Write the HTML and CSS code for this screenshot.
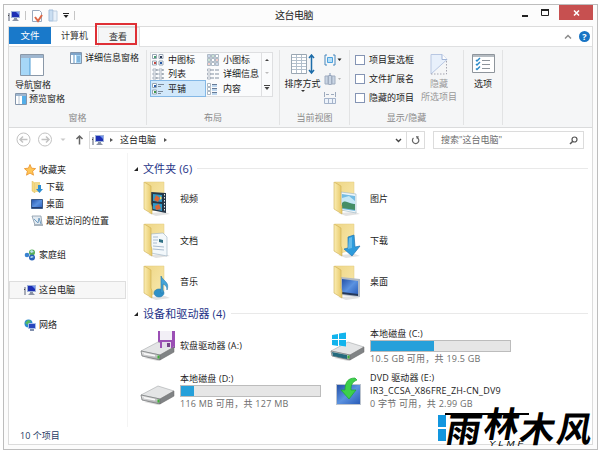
FILE: index.html
```html
<!DOCTYPE html>
<html>
<head>
<meta charset="utf-8">
<title>这台电脑</title>
<link rel="stylesheet" href="styles.css">
</head>
<body>
<svg class="defs" width="0" height="0">
  <defs>
    <linearGradient id="fold" x1="0" x2="1"><stop offset="0" stop-color="#fbeeb4"/><stop offset="1" stop-color="#e6c664"/></linearGradient>
    <linearGradient id="back" x1="0" y1="0" x2="1" y2="1"><stop offset="0" stop-color="#eed686"/><stop offset="1" stop-color="#f9e9ae"/></linearGradient>
    <linearGradient id="blue" x1="0" y1="0" x2="1" y2="1"><stop offset="0" stop-color="#2451a8"/><stop offset=".5" stop-color="#5b92e0"/><stop offset="1" stop-color="#2a5cb8"/></linearGradient>
    <linearGradient id="metal" x1="0" y1="0" x2="0" y2="1"><stop offset="0" stop-color="#f2f2f2"/><stop offset="1" stop-color="#a0a2a4"/></linearGradient>
    <symbol id="pc" viewBox="0 0 12 12"><path d="M0 3h2v8H0z" fill="#a9adb8"/><path d="M0 5h1v1H0z" fill="#444"/><path d="M3 1h9v7H3z" fill="#9db0d8"/><path d="M4 2h7v5H4z" fill="#1d2fb4"/><path d="M8 2h3v3z" fill="#6f93f0"/><path d="M6 8h3v1l2 2H4l2-2z" fill="#8b93a5"/></symbol>
    <symbol id="folder" viewBox="0 0 28 35"><path d="M5 32l17-1 5 2-14 2z" fill="#e2e2e2"/><path d="M2 1h19v25L8 30z" fill="url(#back)" stroke="#e3ca7e" stroke-width=".5"/></symbol>
    <symbol id="flap" viewBox="0 0 28 35"><path d="M1 1l7 4v18l1 3v7l-8-5z" fill="url(#fold)" stroke="#cfae50" stroke-width=".6"/></symbol>
    <symbol id="disk" viewBox="0 0 36 20"><path d="M4 17l14 3 17-9z" fill="#ddd"/><path d="M1 10L18 1l16 5-14 8z" fill="#e4e5e6" stroke="#a5a7a9" stroke-width=".6"/><path d="M1 10l19 4v5L2 15z" fill="url(#metal)" stroke="#6c6e70" stroke-width=".7"/><path d="M20 14l14-8v5l-14 8z" fill="#808385" stroke="#6a6a6a" stroke-width=".5"/><path d="M4 12l11 2v1.500L4 13.500z" fill="#fafafa"/><path d="M17.500 14.500h2v3h-2z" fill="#3cae34"/></symbol>
  </defs>
</svg>
<div class="window">
  <header class="titlebar">
    <div class="quick">
      <svg width="12" height="12"><use href="#pc"/></svg><i class="sep"></i>
      <svg width="12" height="14" viewBox="0 0 12 14"><path d="M1.500 1.500h7l2 2v9h-9z" fill="#fff" stroke="#9aa9bd"/><path d="M4 8l3 4 4-6" fill="none" stroke="#dc6746" stroke-width="2"/></svg>
      <svg width="10" height="13" viewBox="0 0 10 13"><path d="M1 1h4v11H1z" fill="#c9def2" stroke="#a2bddb"/><path d="M5 2h4v10H5z" fill="#e8f1fa" stroke="#bfd0e2"/></svg>
      <svg class="qmenu" width="6" height="5" viewBox="0 0 6 5"><path d="M0 0h6v1H0zM.5 2h5L3 5z" fill="#222"/></svg><i class="sep"></i>
    </div>
    <h1 class="title">这台电脑</h1>
    <div class="controls">
      <svg width="7" height="10" viewBox="0 0 7 10"><path d="M0 7h6v2H0z" fill="#222"/></svg>
      <svg width="8" height="7" viewBox="0 0 8 7"><path d="M.5 1h7v5.500h-7z" fill="none" stroke="#222"/><path d="M0 0h8v2H0z" fill="#222"/></svg>
      <div class="close"><svg width="7" height="6" viewBox="0 0 7 6"><path d="M1 .5l5 5M6 .5l-5 5" stroke="#fff" stroke-width="1.500"/></svg></div>
    </div>
  </header>
  <div class="client">
    <nav class="tabs">
      <span class="tab file">文件</span><span class="tab">计算机</span><span class="tab active">查看</span>
      <div class="tabtools">
        <svg width="8" height="5" viewBox="0 0 8 5"><path d="M1 4.500l3-3 3 3" fill="none" stroke="#8c8c8c" stroke-width="1.500"/></svg>
        <span class="help">?</span>
      </div>
    </nav>
    <section class="ribbon">
      <div class="group g1">
        <div class="body panes">
          <div class="navpane">
            <svg width="24" height="22" viewBox="0 0 24 22"><path d="M.5.5h23v21H.5z" fill="#fff" stroke="#8a98a8"/><path d="M1 1h22v3H1z" fill="#9eb6cf"/><path d="M1 4h9v17H1z" fill="#a6d7f7"/><path d="M10 4v17" stroke="#4e9bd3"/></svg>
            <span>导航窗格</span><i class="down"></i>
            <div class="pane"><svg width="12" height="12" viewBox="0 0 12 12"><path d="M.5.5h11v11H.5z" fill="#fff" stroke="#8496ac"/><path d="M1 1h10v2H1z" fill="#9eb6cf"/><path d="M7 3h4v8H7z" fill="#54aee8"/><path d="M4 3v8" stroke="#b8c6d4"/></svg>预览窗格</div>
          </div>
          <div class="pane detail"><svg width="12" height="12" viewBox="0 0 12 12"><path d="M.5.500h11v11H.5z" fill="#fff" stroke="#8496ac"/><path d="M1 1h10v2H1z" fill="#7fa4c9"/><path d="M6 3h5v8H6z" fill="#a7d5f4"/><path d="M4 3v8M7 5h3M7 7h3M7 9h3" stroke="#5b93c3"/></svg>详细信息窗格</div>
        </div>
        <div class="caption">窗格</div>
      </div>
      <div class="group g2">
        <div class="body">
          <div class="gallery">
            <div class="cells">
              <div class="cell"><svg width="12" height="12" viewBox="0 0 12 12"><path d="M.5.5h4v4h-4zM7 .5h4v4H7zM.5 7h4v4h-4zM7 7h4v4H7z" fill="#fff" stroke="#98a6b4"/><path d="M2 2h2v2H2z" fill="#4c9e72"/><path d="M8 2h2v2H8z" fill="#2e3b58"/><path d="M2 8h2v2H2z" fill="#c74b43"/><path d="M8 8h2v2H8z" fill="#2558a4"/></svg>中图标</div>
              <div class="cell"><svg width="12" height="12" viewBox="0 0 12 12"><path d="M.5.5h3v3h-3zM4.500.5h3v3h-3zM8.500.5h3v3h-3zM.5 4.500h3v3h-3zM4.500 4.500h3v3h-3zM8.500 4.500h3v3h-3zM.5 8.500h3v3h-3zM4.500 8.500h3v3h-3zM8.500 8.500h3v3h-3z" fill="#fff" stroke="#9baab8" stroke-width=".8"/><path d="M5.500 1.500h1v1h-1zM1.500 5.500h1v1h-1z" fill="#2d8e54"/><path d="M9.500 5.500h1v1h-1zM1.500 9.500h1v1h-1z" fill="#cc4037"/><path d="M1.500 1.500h1v1h-1zM9.500 9.500h1v1h-1z" fill="#2c60ad"/></svg>小图标</div>
              <div class="cell"><svg width="12" height="12" viewBox="0 0 12 12"><path d="M1 1h3v2H1zM1 5h3v2H1zM1 9h3v2H1zM7 1h3v2H7zM7 5h3v2H7zM7 9h3v2H7z" fill="#fff" stroke="#9aa5b2" stroke-width=".8"/><path d="M4 2h2M4 6h2M4 10h2M10 2h2M10 6h2M10 10h2" stroke="#75828f"/></svg>列表</div>
              <div class="cell"><svg width="12" height="12" viewBox="0 0 12 12"><path d="M.5 1h3v2h-3zM.5 5h3v2h-3zM.5 9h3v2h-3z" fill="#fff" stroke="#9aa5b2" stroke-width=".8"/><path d="M4 2h3M8 2h4M4 6h3M8 6h4M4 10h3M8 10h4" stroke="#8390a0"/></svg>详细信息</div>
              <div class="cell on"><svg width="12" height="12" viewBox="0 0 12 12"><path d="M.5.5h4v4h-4zM.5 7h4v4h-4z" fill="#fff" stroke="#98a6b4"/><path d="M2 2h2v2H2z" fill="#2c60ad"/><path d="M2 8h2v2H2z" fill="#3e9950"/><path d="M6 1.500h6M6 3.500h3M6 8.500h5M6 10.500h3" stroke="#7d8b9b"/></svg>平铺</div>
              <div class="cell"><svg width="12" height="12" viewBox="0 0 12 12"><path d="M.5.5h3v3h-3zM.5 4.500h3v3h-3zM.5 8.500h3v3h-3z" fill="#fff" stroke="#98a6b4" stroke-width=".8"/><path d="M5 1.500h5M5 5.500h5M5 9.500h5" stroke="#667a96"/><path d="M5 3h5M5 7h5M5 11h5" stroke="#7fb0df"/></svg>内容</div>
            </div>
            <div class="scroll"><i class="tri up"></i><i class="tri dim"></i><svg width="6" height="5" viewBox="0 0 6 5"><path d="M0 0h6v1H0zM.5 2h5L3 5z" fill="#444"/></svg></div>
          </div>
        </div>
        <div class="caption">布局</div>
      </div>
      <div class="group g3">
        <div class="body view">
          <div class="big">
            <svg width="24" height="21" viewBox="0 0 24 21"><path d="M.5.5h15v19H.5z" fill="#fff" stroke="#9aa7b3"/><path d="M1 3.500h14M1 6.500h14M1 9.500h14M1 12.500h14M1 15.500h14M5.500 1v18M10.500 1v18" stroke="#b3c0cc"/><path d="M20.500 2v16M18 4l2.500-3L23 4M18 16l2.500 3 2.500-3" fill="none" stroke="#1c6ca9" stroke-width="1.500"/></svg>
            <span>排序方式</span><i class="down"></i>
          </div>
          <div class="small">
            <svg width="18" height="13" viewBox="0 0 18 13"><path d="M3 1H1v10h2M9 1h2v10H9" fill="none" stroke="#4787bd"/><path d="M3.500 3.500h5v5h-5z" fill="#b5def9" stroke="#4ca3df"/><path d="M13.500 4.500h4L15.500 7z" fill="#222"/></svg>
            <svg width="18" height="14" viewBox="0 0 18 14"><path d="M1 4h3v8H1zM4.500 3.500h3v9h-3zM8 4h3v8H8z" fill="#c9d5e4" stroke="#a0adc0"/><path d="M6 1v3" stroke="#8499b8"/><path d="M14 6h3l-1.500 2z" fill="#b6b6b6"/></svg>
            <svg width="18" height="14" viewBox="0 0 18 14"><path d="M.5 1v5M11.500 1v5M2 3.500h3M7 3.500h3" stroke="#9daabd"/><path d="M.5 7.500h11v5H.5zM4.500 7.500v5M8.500 7.500v5" fill="#edf3fb" stroke="#a4b3ca"/></svg>
          </div>
        </div>
        <div class="caption">当前视图</div>
      </div>
      <div class="group g4">
        <div class="body">
          <div class="checks">
            <label><i class="box"></i>项目复选框</label>
            <label><i class="box"></i>文件扩展名</label>
            <label><i class="box"></i>隐藏的项目</label>
          </div>
          <div class="big hide">
            <svg width="18" height="21" viewBox="0 0 18 21"><path d="M1 .5h11l5 5L1 20z" fill="#e8f0fb" stroke="#b8c7e2"/><path d="M12 .5v5h5" fill="#fff" stroke="#a0b4d6"/><path d="M16.500 7v13H1" fill="none" stroke="#a5a5b0" stroke-dasharray="1.500 1.500"/></svg>
            <span>隐藏</span><span>所选项目</span>
          </div>
        </div>
        <div class="caption">显示/隐藏</div>
      </div>
      <div class="group g5">
        <div class="body">
          <div class="big">
            <svg width="23" height="19" viewBox="0 0 23 19"><path d="M.5.5h22v18H.5z" fill="#fff" stroke="#8e959c"/><path d="M1 1h21v2H1z" fill="#b6bcc2"/><path d="M4 6l1 1 3-3M4 10l1 1 3-3M4 14.500l1 1 3-3" fill="none" stroke="#2b8ac8" stroke-width="1.500"/><path d="M10 6.500h8M10 10.500h8M10 14.500h8" stroke="#8d949b"/></svg>
            <span>选项</span>
          </div>
        </div>
      </div>
    </section>
    <div class="address">
      <svg width="80" height="17" viewBox="0 0 80 17"><g fill="none" stroke="#c3c3c3"><circle cx="14.500" cy="8.500" r="6.500"/><circle cx="36" cy="8.500" r="6.500"/><path d="M18.500 8.500h-7M14 5.500l-3 3 3 3M32.500 8.500h7M37 5.500l3 3-3 3" stroke-width="1.500"/></g><path d="M51.500 7.500h5l-2.500 2.500z" fill="#c9c9c9"/><path d="M70.500 13.500V5M67.500 8l3-3 3 3" fill="none" stroke="#666" stroke-width="1.500"/></svg>
      <div class="path">
        <svg width="12" height="12"><use href="#pc"/></svg><i class="chev"></i><span>这台电脑</span><i class="chev"></i>
        <div class="pathend">
          <svg width="7" height="5" viewBox="0 0 7 5"><path d="M1 1l2.500 2.500L6 1" fill="none" stroke="#444" stroke-width="1.400"/></svg>
          <div class="refresh"><svg width="9" height="9" viewBox="0 0 9 9"><path d="M6.500 1.800A3.200 3.200 0 1 1 2.500 2" fill="none" stroke="#666" stroke-width="1.200"/><path d="M5 0l3 .5L6 3.500z" fill="#666"/></svg></div>
        </div>
      </div>
      <div class="search"><span>搜索"这台电脑"</span><svg width="9" height="9" viewBox="0 0 9 9"><circle cx="5.500" cy="3.500" r="2.500" fill="none" stroke="#555" stroke-width="1.200"/><path d="M3.800 5.200L1 8" stroke="#555" stroke-width="1.500"/></svg></div>
    </div>
    <div class="main">
      <aside class="side">
        <div class="item"><svg width="12" height="12" viewBox="0 0 12 12"><path d="M6 .5l1.600 3.700 4 .4-3 2.600.9 4L6 9.100l-3.500 2.100.9-4-3-2.600 4-.4z" fill="#ffc656" stroke="#e8902a" stroke-width=".8"/></svg>收藏夹</div>
        <div class="item sub"><svg width="12" height="12" viewBox="0 0 12 12"><path d="M1 0l3 2v10L1 10z" fill="#f4d981" stroke="#d4b152" stroke-width=".4"/><path d="M3 1h6v10H4V2z" fill="#f0d98d"/><path d="M7 4h3v4h2l-3.500 4L5 8h2z" fill="#2d8ed3"/></svg>下载</div>
        <div class="item sub"><svg width="12" height="12" viewBox="0 0 12 12"><path d="M.5 1.500h11v9H.5z" fill="url(#blue)" stroke="#3d5c89"/><path d="M1 9h10v1H1z" fill="#223c71"/></svg>桌面</div>
        <div class="item sub"><svg width="12" height="12" viewBox="0 0 12 12"><path d="M1 1h9l1 9H4L2 4z" fill="#e3ebf2" stroke="#8898a7" stroke-width=".8"/><path d="M3 4l4 4 1-5 2 6" fill="none" stroke="#729ec2"/><path d="M3 9h9v2H3z" fill="#aab5bf"/></svg>最近访问的位置</div>
        <div class="item gap"><svg width="12" height="12" viewBox="0 0 12 12"><circle cx="8" cy="3.500" r="3" fill="#58ae59"/><circle cx="3" cy="6" r="2.300" fill="#3a83cf"/><circle cx="8" cy="8.500" r="3" fill="#2962ba"/><path d="M6 2l2-1 2 2-3 1zM6 8l2-1 2 1-3 1z" fill="#bce2f3"/></svg>家庭组</div>
        <div class="item gap selected"><svg width="12" height="12"><use href="#pc"/></svg>这台电脑</div>
        <div class="item gap"><svg width="12" height="12" viewBox="0 0 12 12"><circle cx="4.500" cy="4.500" r="4" fill="#2a8bd0"/><path d="M1 4l3-3 3 1-3 4z" fill="#56b961"/><path d="M4.500 4.500h7v5h-7z" fill="#2746be" stroke="#a7bde8"/><path d="M6 10h4v2H6z" fill="#8290ad"/></svg>网络</div>
      </aside>
      <section class="content">
        <h2><i class="corner"></i><span>文件夹 (6)</span></h2>
        <div class="folders">
          <div class="tile"><svg width="28" height="35" viewBox="0 0 28 35"><use href="#folder"/><path d="M8 11l15 1v20L8 29z" fill="#263747"/><path d="M10 13l9 1v7l-9-1zM10 22l9 1v7l-9-2z" fill="#319bc8"/><path d="M13 14l4 3-2 4-4-2zM12 25l4-2 2 5-5 1z" fill="#db6736"/><path d="M17 15l2 2-2 2z" fill="#f6d15f"/><path d="M21.500 13v18" stroke="#eee" stroke-dasharray="1.500 1.500"/><use href="#flap"/></svg>视频</div>
          <div class="tile"><svg width="28" height="35" viewBox="0 0 28 35"><use href="#folder"/><path d="M8 11l15 2v19L8 29z" fill="#eef5f9" stroke="#99b6c5" stroke-width=".6"/><path d="M9 13l13 2v15L9 28z" fill="#74bce3"/><path d="M9 17l7-2 6 5v3l-13-1z" fill="#c6e8f6"/><path d="M9 22c4-4 8 2 13 1v6L9 27z" fill="#458e66"/><use href="#flap"/></svg>图片</div>
          <div class="tile"><svg width="28" height="35" viewBox="0 0 28 35"><use href="#folder"/><path d="M8 11l12-1 4 4v19L8 30z" fill="#f3f8fb" stroke="#97afc1" stroke-width=".6"/><path d="M10 14h5M10 17h5M10 20h4M10 23l11 1M10 26l11 1" stroke="#aabdd0"/><path d="M16 16l4 1v3l-4-1z" fill="#2f7185"/><use href="#flap"/></svg>文档</div>
          <div class="tile"><svg width="28" height="35" viewBox="0 0 28 35"><use href="#folder"/><use href="#flap"/><path d="M15 14l6-2 1 12 5-1-8 10-8-7 4-1z" fill="#2c9bdc" stroke="#2075b4" stroke-width=".7"/><path d="M16 15l3-1v11l-4 1z" fill="#7bc9f0" opacity=".7"/></svg>下载</div>
          <div class="tile"><svg width="28" height="35" viewBox="0 0 28 35"><use href="#folder"/><use href="#flap"/><ellipse cx="16" cy="28" rx="5" ry="4" fill="#2f91c8" stroke="#2578ab" stroke-width=".6"/><path d="M18 28V11c2 5 9 6 6 14 0-4-2-5-4-6v9z" fill="#46a4d8" stroke="#2578ab" stroke-width=".6"/></svg>音乐</div>
          <div class="tile"><svg width="28" height="35" viewBox="0 0 28 35"><use href="#folder"/><path d="M8 12l19 2v18L8 30z" fill="#b1bac5"/><path d="M9 14l16 2v14L9 28z" fill="url(#blue)"/><path d="M9 27l16 2v2L9 29z" fill="#253859"/><use href="#flap"/></svg>桌面</div>
        </div>
        <h2><i class="corner"></i><span>设备和驱动器 (4)</span></h2>
        <div class="drives">
          <div class="drive">
            <svg width="36" height="32" viewBox="0 0 36 32"><path d="M18 1h17v17H18z" fill="#9b4fb5"/><path d="M20 1h12v9H20z" fill="#f2eff6"/><use href="#disk" y="11" width="36" height="20"/><path d="M20 12h13v6H20z" fill="#9b4fb5"/><path d="M22 12h9v6h-9z" fill="#e3dce9"/><path d="M27 13h3v4h-3z" fill="#744288"/></svg>
            <div class="info"><span>软盘驱动器 (A:)</span></div>
          </div>
          <div class="drive">
            <svg width="36" height="32" viewBox="0 0 36 32"><use href="#disk" y="11" width="36" height="20"/><path d="M2 5l6-1v5H2zM9 3.500l7-1V9H9zM2 10h6v6l-6-1zM9 10h7v6.500l-7-1z" fill="#12b4ed"/><path d="M2 22l15 3v4L3 26z" fill="#256a7d"/></svg>
            <div class="info"><span>本地磁盘 (C:)</span><div class="bar"><i style="width:45.500%"></i></div><span class="free">10.5 GB 可用，共 19.5 GB</span></div>
          </div>
          <div class="drive">
            <svg width="36" height="32" viewBox="0 0 36 32"><use href="#disk" y="10" width="36" height="20"/></svg>
            <div class="info"><span>本地磁盘 (D:)</span><div class="bar"><i style="width:9.500%"></i></div><span class="free">116 MB 可用，共 127 MB</span></div>
          </div>
          <div class="drive">
            <svg width="36" height="32" viewBox="0 0 36 32"><path d="M6 9h25v21H6z" fill="#bbc3ce"/><path d="M7 10h23v19H7z" fill="url(#blue)"/><path d="M25 3c-7 0-10 4-10 12h-4l8 9 7-9h-5c0-5 1-8 6-10z" fill="#3dd04b" stroke="#1da630" stroke-width=".7"/></svg>
            <div class="info"><span>DVD 驱动器 (E:)</span><span class="dvd">IR3_CCSA_X86FRE_ZH-CN_DV9</span><span class="free">0 字节 可用，共 2.99 GB</span></div>
          </div>
        </div>
      </section>
    </div>
    <footer class="status">10 个项目</footer>
  </div>
</div>
<div class="highlight"></div>
<div class="brand">
  <div class="tiles"><i></i><i></i></div>
  <div class="stroke"></div>
  <div class="brandname"><span class="c1">雨</span><span class="c2">林</span><span class="c3">木</span><span class="c4">风</span></div>
  <div class="latin">YLMF</div>
</div>
</body>
</html>
```
FILE: styles.css
```css
* { box-sizing: border-box; }
body { margin: 0; width: 600px; height: 452px; background: #fff; padding: 4px 2px 2px 3px; position: relative; font: 9px/12px "Open Sans", "Noto Sans CJK SC", sans-serif; color: #222; }
html { overflow: hidden; }
svg { display: block; flex: none; }
.defs { position: absolute; }
h1, h2 { margin: 0; font-weight: normal; }
.window { width: 595px; height: 446px; border: 1px solid #bdbdbd; background: #fcfcfc; padding: 0 4px 4px; }
.titlebar { height: 21px; display: grid; grid-template-columns: 192px 1fr 208px; }
.quick { display: flex; align-items: center; gap: 5px; height: 21px; }
.qmenu { margin-left: 0; }
.quick .sep { width: 1px; height: 9px; background: #c5c5c5; }
.title { font-size: 10px; text-align: center; line-height: 20px; letter-spacing: -.5px; padding-left: 3px; }
.controls { display: flex; justify-content: flex-end; align-items: center; height: 15px; }
.controls > svg { margin-right: 12px; }
.controls > svg:nth-child(2) { margin-right: 6px; }
.close { width: 34px; height: 15px; margin-left: 4px; background: #c75050; display: flex; align-items: center; justify-content: center; }
.client { height: 419px; border: 1px solid #dcdcdc; background: #fff; display: flex; flex-direction: column; }
.tabs { height: 20px; display: flex; flex: none; background: #fff; border-bottom: 1px solid #dfe0e1; }
.tab { width: 49px; text-align: center; line-height: 18px; height: 17px; color: #333; padding-right: 2px; }
.tab.file { width: 42px; background: #1979ca; color: #fff; font-size: 9.500px; line-height: 17px; padding: 0; }
.tab.active { width: 42px; height: 20px; background: #f5f6f7; border: 1px solid #dfe0e1; border-bottom: 0; margin-left: -2px; padding-right: 2px; }
.tabtools { margin-left: auto; display: flex; gap: 7px; padding-right: 2px; align-items: center; }
.help { width: 11px; height: 11px; border-radius: 50%; background: #1874c4; color: #fff; font: bold 9px/11px "Open Sans", sans-serif; text-align: center; }
.ribbon { height: 81px; flex: none; background: #f5f6f7; border-bottom: 1px solid #dadbdc; display: flex; padding: 3px 0 2px; }
.group { border-right: 1px solid #e2e3e4; display: flex; flex-direction: column; }
.body { height: 61px; display: flex; padding-top: 4px; }
.caption { text-align: center; color: #8a8a8a; line-height: 13px; }
.g1 { width: 138px; } .g2 { width: 133px; } .g3 { width: 70px; } .g4 { width: 114px; } .g5 { width: 39px; }
.navpane { width: 61px; padding-left: 6px; }
.navpane > svg { margin: 0 0 3px 5px; }
.navpane > span { display: block; height: 12px; }
.down { display: block; width: 0; border: 2px solid transparent; border-top: 2px solid #333; border-bottom: 0; margin: 1px auto 0; }
.navpane .down { margin: -1px 0 1px 16px; }
.pane { display: flex; gap: 2px; white-space: nowrap; height: 12px; line-height: 12px; }
.pane.detail { margin-top: -2px; gap: 3px; }
.g2 .body { padding: 2px 0 0 3px; }
.gallery { width: 123px; height: 45px; display: flex; border: 1px solid #dedfe1; background: #fafbfc; }
.cells { width: 110px; display: grid; grid-template-columns: 54px 56px; grid-template-rows: 13px 15px 15px; }
.cell { display: flex; gap: 4px; align-items: center; padding-left: 1px; white-space: nowrap; }
.cell:nth-child(even) { padding-left: 2px; }
.cell.on { background: #d1e8fb; box-shadow: 0 0 0 1px #84b8e6; }
.scroll { flex: 1; border-left: 1px solid #dedfe1; display: flex; flex-direction: column; justify-content: space-around; align-items: center; }
.tri { width: 0; border: 2px solid transparent; border-top: 2px solid #444; border-bottom: 0; }
.tri.up { border-top: 0; border-bottom: 2px solid #444; }
.tri.dim { border-top-color: #bbb; }
.view { padding-left: 4px; }
.big { display: flex; flex-direction: column; align-items: center; line-height: 13px; }
.big svg { margin-bottom: 2px; }
.view .down { margin-top: 0; }
.view .big { width: 37px; }
.small { display: flex; flex-direction: column; gap: 5px; margin-left: 3px; }
.checks { padding-left: 5px; width: 68px; display: flex; flex-direction: column; gap: 7px; }
.checks label { display: flex; gap: 4px; height: 12px; white-space: nowrap; align-items: center; }
.box { width: 10px; height: 10px; border: 1px solid #8494b4; background: #fff; }
.hide { color: #999; width: 42px; }
.g5 .big { width: 38px; }
.g5 .big svg { margin-bottom: 4px; }
.address { height: 25px; flex: none; padding-top: 3px; display: flex; }
.path { width: 336px; height: 18px; border: 1px solid #dcdcdc; display: flex; align-items: center; padding-left: 2px; }
.path span { margin: 0 8px 0 7px; }
.chev { width: 0; border: 2px solid transparent; border-left: 3px solid #555; border-right: 0; }
.path svg + .chev { margin-left: 6px; }
.pathend { margin-left: auto; height: 100%; display: flex; align-items: center; gap: 4px; }
.refresh { width: 18px; height: 100%; border-left: 1px solid #dcdcdc; display: grid; place-items: center; }
.search { width: 151px; height: 18px; margin-left: 8px; border: 1px solid #dcdcdc; display: flex; align-items: center; justify-content: space-between; padding: 0 5px 0 7px; color: #6d6d6d; }
.main { flex: 1; display: flex; min-height: 0; }
.side { width: 119px; padding-top: 8px; border-right: 1px solid #f4f4f4; }
.item { height: 17px; display: flex; align-items: center; gap: 3px; padding-left: 15px; white-space: nowrap; }
.item.sub { padding-left: 22px; }
.item.gap { margin-top: 17px; }
.item.selected { background: #f7f7f7; box-shadow: inset 0 0 0 1px #dedede; height: 18px; margin-top: 18px; margin-right: 1px; }
.content { flex: 1; padding: 7px 4px 0 6px; }
h2 { height: 17px; font-size: 11px; line-height: 17px; color: #1e3287; display: flex; align-items: center; gap: 5px; }
h2::after { content: ""; flex: 1; height: 1px; background: #e9e9e9; }
h2 span { letter-spacing: .1px; }
.corner { width: 0; height: 0; border-left: 4px solid transparent; border-bottom: 4px solid #222; }
.folders { display: grid; grid-template-columns: 190px 1fr; grid-template-rows: repeat(3, 41.700px); padding: 1px 0 2px 9px; }
.tile { display: flex; align-items: center; gap: 9px; }
.drives { display: grid; grid-template-columns: 190px 1fr; grid-template-rows: 45px 45px; padding: 1px 0 0 6px; }
.drive { display: flex; align-items: center; gap: 4px; }
.info { display: flex; flex-direction: column; white-space: nowrap; letter-spacing: .12px; }
.info > span { line-height: 13px; }
.bar { width: 141px; height: 12px; border: 1px solid #bcbcbc; background: #e6e6e6; }
.bar i { display: block; height: 100%; background: #26a0da; }
.free { color: #6d6d6d; letter-spacing: .25px; }
.dvd { letter-spacing: .2px; }
.status { height: 17px; line-height: 17px; padding-left: 11px; color: #243a63; }
.highlight { position: absolute; left: 95px; top: 23px; width: 42px; height: 22px; border: 2px solid #df3036; }
.brand { position: absolute; left: 438px; top: 405px; width: 160px; height: 44px; color: #000; }
.tiles { position: absolute; left: 0; top: 10px; display: grid; gap: 2px; }
.tiles i { width: 8px; height: 12px; background: #1296df; }
.stroke { position: absolute; left: 7px; top: 8px; width: 84px; height: 2px; background: #000; }
.brandname { position: absolute; left: 9px; top: 0; display: flex; font: 700 35px/44px "Noto Sans CJK SC", sans-serif; white-space: nowrap; transform: skewX(-10deg); }
.brandname span { width: 37px; height: 44px; }
.c2 { position: relative; top: -5px; }
.latin { position: absolute; left: 51px; top: 35px; font: italic 7px/8px "Liberation Sans", sans-serif; letter-spacing: 2px; transform: scaleX(1.400); transform-origin: left; }
```
